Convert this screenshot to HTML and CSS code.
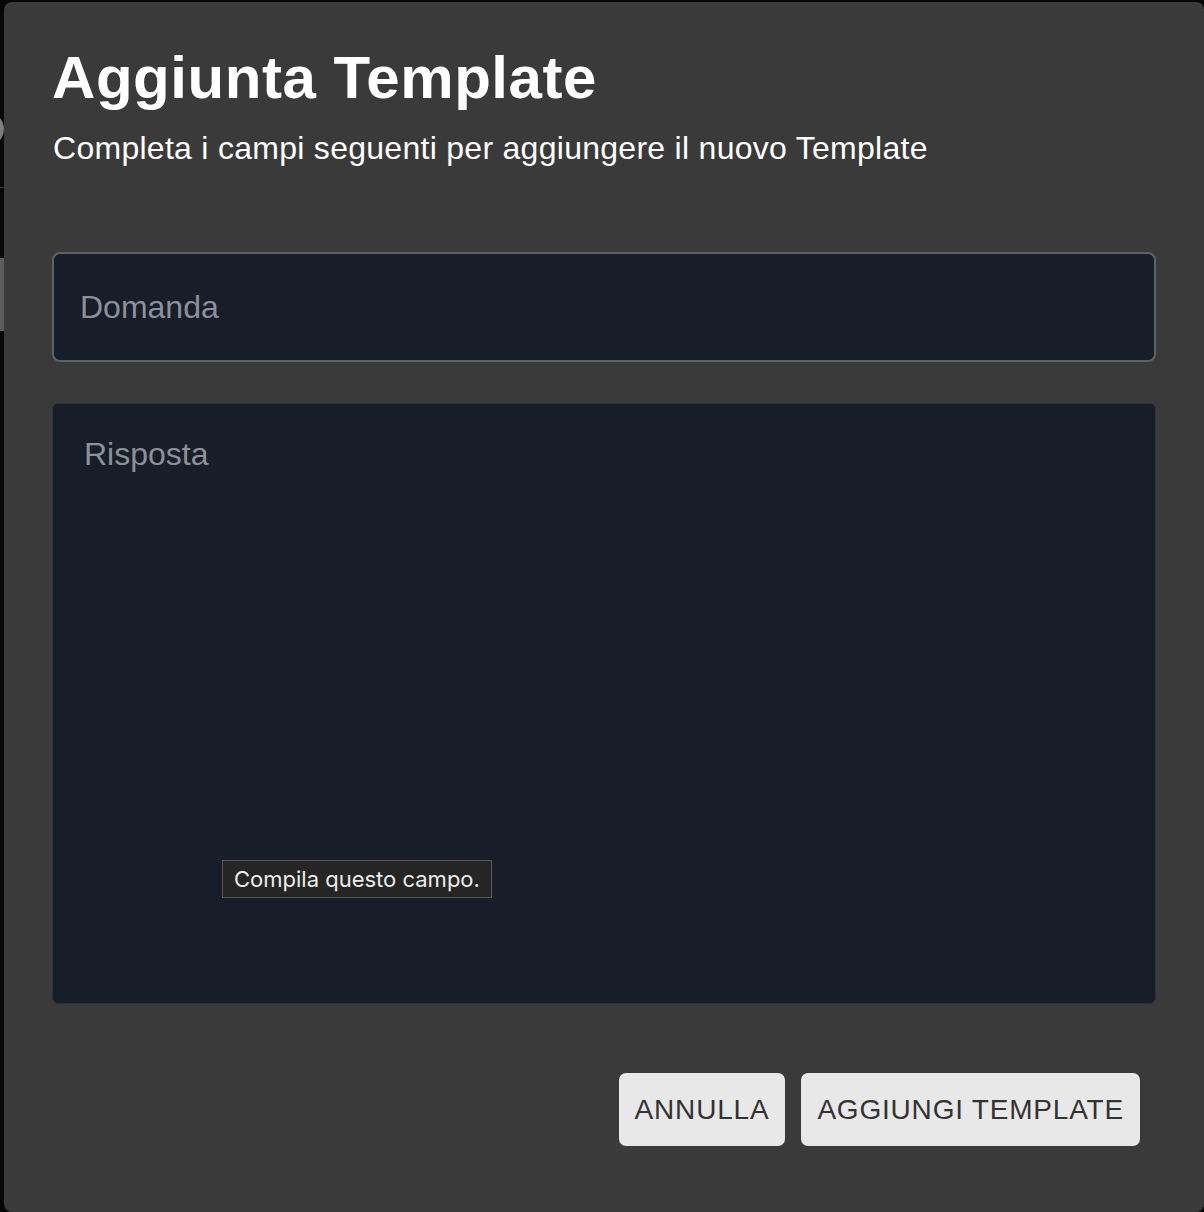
FILE: index.html
```html
<!DOCTYPE html>
<html lang="it">
<head>
<meta charset="utf-8">
<title>Aggiunta Template</title>
<link rel="stylesheet" href="styles.css">
</head>
<body>
<div class="backdrop">
  <span class="bg-avatar"></span>
  <span class="bg-line"></span>
  <span class="bg-block"></span>
</div>
<div class="dialog" role="dialog">
  <header class="dialog-header">
    <h1 class="dialog-title">Aggiunta Template</h1>
    <p class="dialog-subtitle">Completa i campi seguenti per aggiungere il nuovo Template</p>
  </header>
  <form class="dialog-form">
    <div class="field field-input">Domanda</div>
    <div class="field field-textarea">Risposta</div>
  </form>
  <footer class="dialog-actions">
    <button type="button" class="btn">Annulla</button>
    <button type="button" class="btn">Aggiungi Template</button>
  </footer>
</div>
<div class="tooltip">Compila questo campo.</div>
</body>
</html>
```
FILE: styles.css
```css
html, body {
  margin: 0;
  padding: 0;
  width: 1204px;
  height: 1212px;
  overflow: hidden;
  background: #070707;
  font-family: "Liberation Sans", Arial, sans-serif;
}

.backdrop {
  position: absolute;
  inset: 0;
}

.bg-avatar {
  position: absolute;
  left: -30px;
  top: 112px;
  width: 34px;
  height: 34px;
  border-radius: 50%;
  background: #7d7d7d;
}

.bg-line {
  position: absolute;
  left: 0;
  top: 187px;
  width: 10px;
  height: 1px;
  background: #333;
}

.bg-block {
  position: absolute;
  left: 0;
  top: 258px;
  width: 10px;
  height: 73px;
  background: #5d5d5d;
}

.dialog {
  position: absolute;
  left: 4px;
  top: 2px;
  width: 1200px;
  height: 1210px;
  box-sizing: border-box;
  background: #3a3a3a;
  border-radius: 8px;
  padding: 40px 48px 0 48px;
  display: flex;
  flex-direction: column;
}

.dialog-title {
  margin: 0;
  color: #ffffff;
  font-size: 60px;
  font-weight: 700;
  line-height: 72px;
  letter-spacing: 0.55px;
}

.dialog-subtitle {
  margin: 14px 0 0 1px;
  color: #ffffff;
  font-size: 32px;
  line-height: 40px;
  letter-spacing: 0.28px;
}

.dialog-form {
  margin-top: 84px;
  display: flex;
  flex-direction: column;
  gap: 41px;
}

.field {
  box-sizing: border-box;
  background: #181d2a;
  color: #8e9097;
  font-size: 32px;
}

.field-input {
  height: 110px;
  border: 2px solid #5f6168;
  border-radius: 8px;
  padding: 0 26px;
  display: flex;
  align-items: center;
}

.field-textarea {
  height: 601px;
  border: 1px solid #2d313b;
  border-radius: 6px;
  padding: 30px 31px;
  line-height: 40px;
}

.dialog-actions {
  margin-top: 69px;
  padding-right: 16px;
  display: flex;
  justify-content: flex-end;
  gap: 16px;
}

.btn {
  height: 73px;
  padding: 0 16px;
  border: none;
  border-radius: 7px;
  background: #e8e8e8;
  color: #333333;
  font-family: "Liberation Sans", Arial, sans-serif;
  font-size: 28px;
  letter-spacing: 0.8px;
  text-transform: uppercase;
}

.tooltip {
  position: absolute;
  left: 222px;
  top: 860px;
  height: 38px;
  box-sizing: border-box;
  padding: 0 11px;
  display: flex;
  align-items: center;
  background: #252526;
  border: 1px solid #585858;
  color: #ececec;
  font-family: Inter, "Liberation Sans", sans-serif;
  font-size: 22px;
}
```
